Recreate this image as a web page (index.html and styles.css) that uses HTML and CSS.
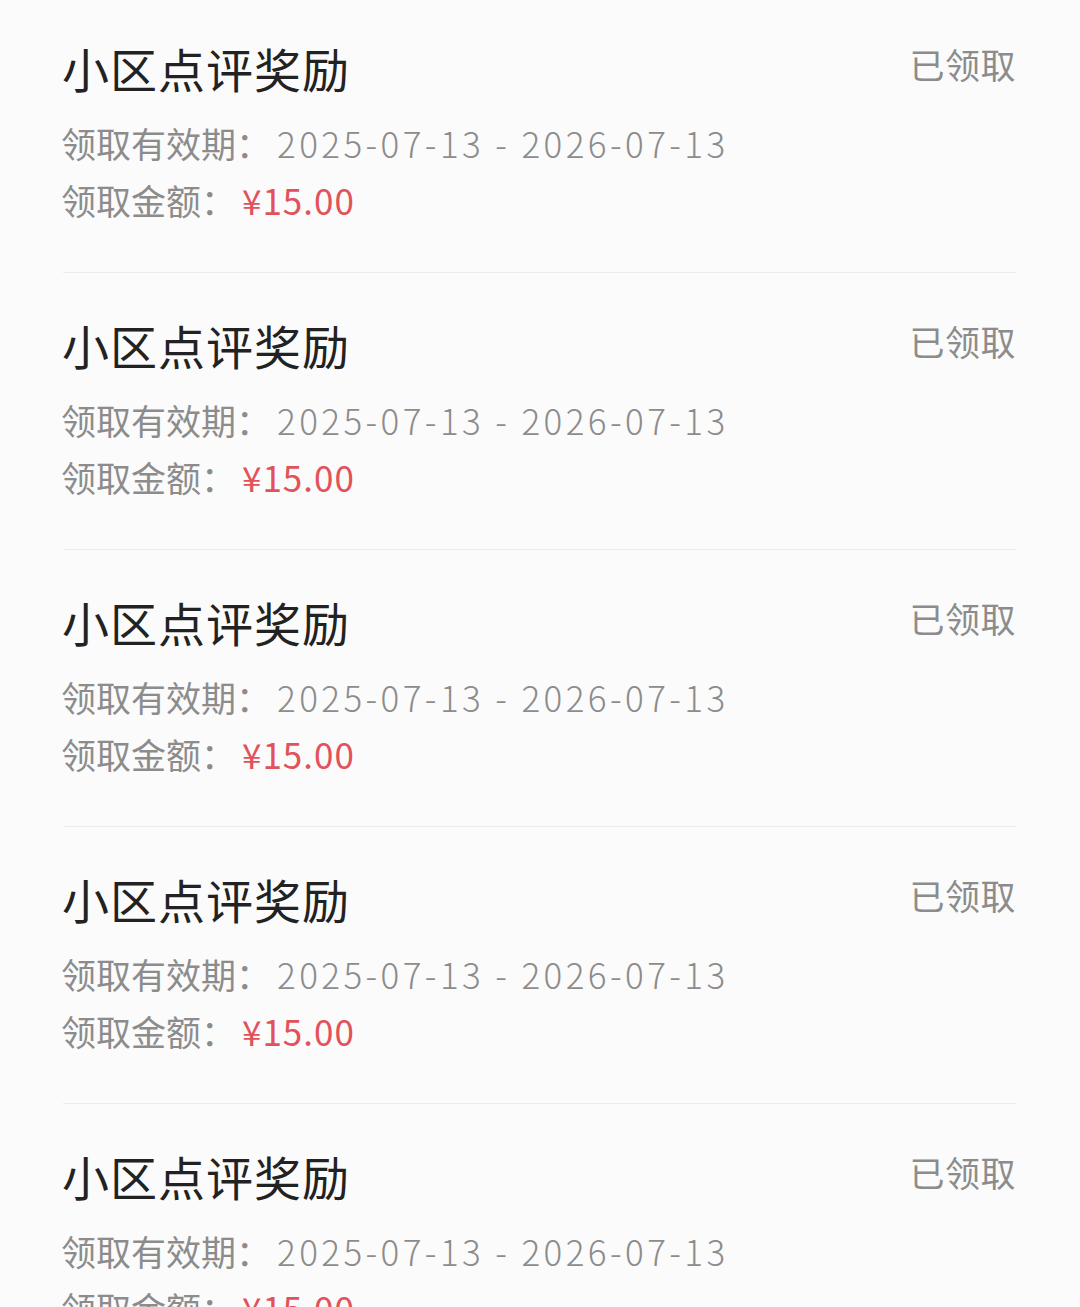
FILE: index.html
```html
<!DOCTYPE html>
<html lang="zh-CN">
<head>
<meta charset="utf-8">
<title>奖励记录</title>
<link rel="stylesheet" href="styles.css">
</head>
<body>
<div class="list">
  <div class="item">
    <div class="info">
      <div class="title">小区点评奖励</div>
      <div class="line">领取有效期：<span class="date">2025-07-13 - 2026-07-13</span></div>
      <div class="line amount-line">领取金额：<span class="amount">¥15.00</span></div>
    </div>
    <div class="status">已领取</div>
  </div>
  <div class="item">
    <div class="info">
      <div class="title">小区点评奖励</div>
      <div class="line">领取有效期：<span class="date">2025-07-13 - 2026-07-13</span></div>
      <div class="line amount-line">领取金额：<span class="amount">¥15.00</span></div>
    </div>
    <div class="status">已领取</div>
  </div>
  <div class="item">
    <div class="info">
      <div class="title">小区点评奖励</div>
      <div class="line">领取有效期：<span class="date">2025-07-13 - 2026-07-13</span></div>
      <div class="line amount-line">领取金额：<span class="amount">¥15.00</span></div>
    </div>
    <div class="status">已领取</div>
  </div>
  <div class="item">
    <div class="info">
      <div class="title">小区点评奖励</div>
      <div class="line">领取有效期：<span class="date">2025-07-13 - 2026-07-13</span></div>
      <div class="line amount-line">领取金额：<span class="amount">¥15.00</span></div>
    </div>
    <div class="status">已领取</div>
  </div>
  <div class="item">
    <div class="info">
      <div class="title">小区点评奖励</div>
      <div class="line">领取有效期：<span class="date">2025-07-13 - 2026-07-13</span></div>
      <div class="line amount-line">领取金额：<span class="amount">¥15.00</span></div>
    </div>
    <div class="status">已领取</div>
  </div>
</div>
</body>
</html>
```
FILE: styles.css
```css
html, body {
  margin: 0;
  padding: 0;
  background: #fbfbfb;
}
body {
  font-family: "Noto Sans CJK SC", "Noto Sans", sans-serif;
  overflow: hidden;
  height: 1307px;
}
.list {
  margin-top: -4px;
  padding: 0 64px 0 63px;
}
.item {
  display: flex;
  justify-content: space-between;
  align-items: flex-start;
  padding: 44px 0 47px;
  border-bottom: 1px solid #ececec;
}
.info {
  display: flex;
  flex-direction: column;
}
.title {
  font-size: 47px;
  line-height: 56px;
  letter-spacing: 1px;
  color: #222222;
  font-weight: 400;
  margin-left: -1px;
}
.line {
  font-size: 35px;
  line-height: 50px;
  color: #8c8c8c;
  margin-top: 22px;
  margin-left: -2px;
  white-space: nowrap;
}
.amount-line {
  margin-top: 7px;
}
.date {
  margin-left: 6px;
  letter-spacing: 3.4px;
  font-weight: 300;
}
.amount {
  color: #e2525a;
  margin-left: 6px;
  letter-spacing: 1px;
}
.status {
  font-size: 35px;
  line-height: 50px;
  color: #8c8c8c;
  margin-top: -1px;
  letter-spacing: 0.5px;
}
```
